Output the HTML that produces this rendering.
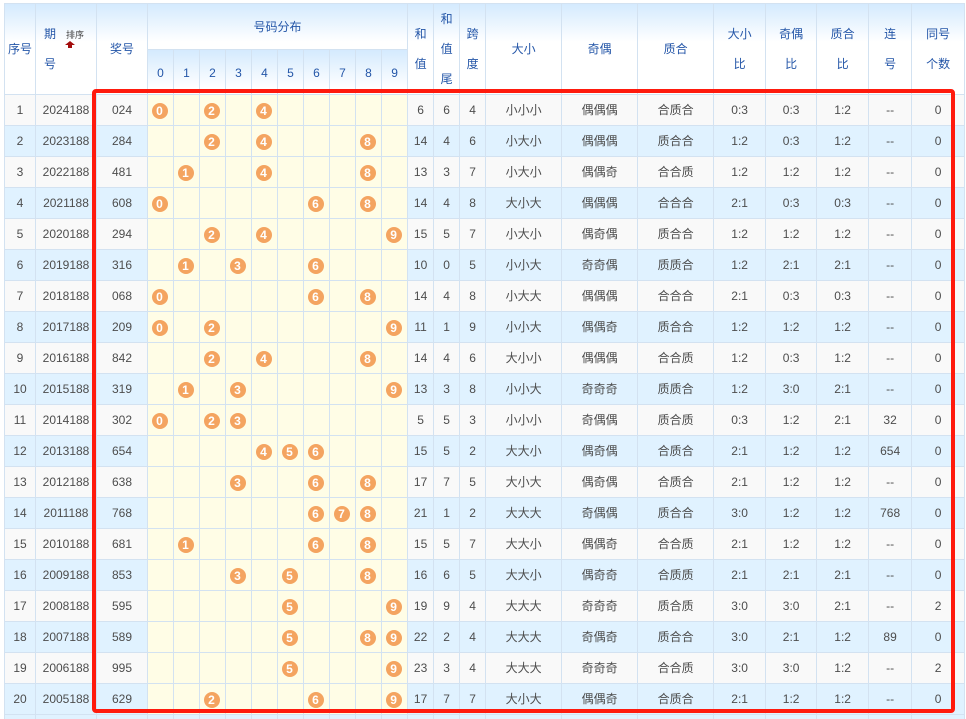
<!DOCTYPE html>
<html lang="zh">
<head>
<meta charset="utf-8">
<title>号码分布</title>
<style>
html,body{margin:0;padding:0;background:#fff;width:966px;height:719px;overflow:hidden}
body{position:relative;font:12px/1.2 "Liberation Sans","Noto Sans CJK SC",sans-serif;color:#4d4d4d}
table{position:absolute;left:4px;top:3px;width:960px;table-layout:fixed;border-collapse:collapse}
td,th{border:1px solid #d3e2f1;padding:0;text-align:center;font-weight:normal;overflow:hidden}
th{color:#2456a8;line-height:30px;background:#fff linear-gradient(#d4eafe,#fff) no-repeat;background-size:100% 38px}
.h1{height:45px}.h2{height:44px}
.h2 th{padding-top:1px;line-height:42px;box-sizing:border-box}
tbody tr{height:31px}
td{height:30px;line-height:30px;background:#f9f9f9}
tr.b td{background:#e0f2ff}
td.y,tr.b td.y{background:#fffde6}
i{display:inline-block;width:16px;height:16px;border-radius:50%;background:#f4a460;color:#fff;font:bold 12px/16px "Liberation Sans",sans-serif;vertical-align:middle;position:relative;left:-1px}
.abs{position:absolute;line-height:14px}
#box{position:absolute;left:92px;top:89px;width:855px;height:616px;border:4px solid #ff1a0d;border-radius:4px}
</style>
</head>
<body>
<table>
<colgroup><col style="width:31px"><col style="width:61px"><col style="width:51px"><col style="width:26px"><col style="width:26px"><col style="width:26px"><col style="width:26px"><col style="width:26px"><col style="width:26px"><col style="width:26px"><col style="width:26px"><col style="width:26px"><col style="width:26px"><col style="width:26px"><col style="width:26px"><col style="width:26px"><col style="width:76px"><col style="width:76px"><col style="width:76px"><col style="width:52px"><col style="width:51px"><col style="width:52px"><col style="width:43px"><col style="width:53px"></colgroup>
<thead>
<tr class="h1"><th rowspan="2">序号</th><th rowspan="2"></th><th rowspan="2">奖号</th><th colspan="10" style="padding-bottom:0">号码分布</th><th rowspan="2">和<br>值</th><th rowspan="2">和<br>值<br>尾</th><th rowspan="2">跨<br>度</th><th rowspan="2">大小</th><th rowspan="2">奇偶</th><th rowspan="2">质合</th><th rowspan="2">大小<br>比</th><th rowspan="2">奇偶<br>比</th><th rowspan="2">质合<br>比</th><th rowspan="2">连<br>号</th><th rowspan="2">同号<br>个数</th></tr>
<tr class="h2"><th>0</th><th>1</th><th>2</th><th>3</th><th>4</th><th>5</th><th>6</th><th>7</th><th>8</th><th>9</th></tr>
</thead>
<tbody>
<tr><td>1</td><td>2024188</td><td>024</td><td class="y"><i>0</i></td><td class="y"></td><td class="y"><i>2</i></td><td class="y"></td><td class="y"><i>4</i></td><td class="y"></td><td class="y"></td><td class="y"></td><td class="y"></td><td class="y"></td><td>6</td><td>6</td><td>4</td><td>小小小</td><td>偶偶偶</td><td>合质合</td><td>0:3</td><td>0:3</td><td>1:2</td><td>--</td><td>0</td></tr>
<tr class="b"><td>2</td><td>2023188</td><td>284</td><td class="y"></td><td class="y"></td><td class="y"><i>2</i></td><td class="y"></td><td class="y"><i>4</i></td><td class="y"></td><td class="y"></td><td class="y"></td><td class="y"><i>8</i></td><td class="y"></td><td>14</td><td>4</td><td>6</td><td>小大小</td><td>偶偶偶</td><td>质合合</td><td>1:2</td><td>0:3</td><td>1:2</td><td>--</td><td>0</td></tr>
<tr><td>3</td><td>2022188</td><td>481</td><td class="y"></td><td class="y"><i>1</i></td><td class="y"></td><td class="y"></td><td class="y"><i>4</i></td><td class="y"></td><td class="y"></td><td class="y"></td><td class="y"><i>8</i></td><td class="y"></td><td>13</td><td>3</td><td>7</td><td>小大小</td><td>偶偶奇</td><td>合合质</td><td>1:2</td><td>1:2</td><td>1:2</td><td>--</td><td>0</td></tr>
<tr class="b"><td>4</td><td>2021188</td><td>608</td><td class="y"><i>0</i></td><td class="y"></td><td class="y"></td><td class="y"></td><td class="y"></td><td class="y"></td><td class="y"><i>6</i></td><td class="y"></td><td class="y"><i>8</i></td><td class="y"></td><td>14</td><td>4</td><td>8</td><td>大小大</td><td>偶偶偶</td><td>合合合</td><td>2:1</td><td>0:3</td><td>0:3</td><td>--</td><td>0</td></tr>
<tr><td>5</td><td>2020188</td><td>294</td><td class="y"></td><td class="y"></td><td class="y"><i>2</i></td><td class="y"></td><td class="y"><i>4</i></td><td class="y"></td><td class="y"></td><td class="y"></td><td class="y"></td><td class="y"><i>9</i></td><td>15</td><td>5</td><td>7</td><td>小大小</td><td>偶奇偶</td><td>质合合</td><td>1:2</td><td>1:2</td><td>1:2</td><td>--</td><td>0</td></tr>
<tr class="b"><td>6</td><td>2019188</td><td>316</td><td class="y"></td><td class="y"><i>1</i></td><td class="y"></td><td class="y"><i>3</i></td><td class="y"></td><td class="y"></td><td class="y"><i>6</i></td><td class="y"></td><td class="y"></td><td class="y"></td><td>10</td><td>0</td><td>5</td><td>小小大</td><td>奇奇偶</td><td>质质合</td><td>1:2</td><td>2:1</td><td>2:1</td><td>--</td><td>0</td></tr>
<tr><td>7</td><td>2018188</td><td>068</td><td class="y"><i>0</i></td><td class="y"></td><td class="y"></td><td class="y"></td><td class="y"></td><td class="y"></td><td class="y"><i>6</i></td><td class="y"></td><td class="y"><i>8</i></td><td class="y"></td><td>14</td><td>4</td><td>8</td><td>小大大</td><td>偶偶偶</td><td>合合合</td><td>2:1</td><td>0:3</td><td>0:3</td><td>--</td><td>0</td></tr>
<tr class="b"><td>8</td><td>2017188</td><td>209</td><td class="y"><i>0</i></td><td class="y"></td><td class="y"><i>2</i></td><td class="y"></td><td class="y"></td><td class="y"></td><td class="y"></td><td class="y"></td><td class="y"></td><td class="y"><i>9</i></td><td>11</td><td>1</td><td>9</td><td>小小大</td><td>偶偶奇</td><td>质合合</td><td>1:2</td><td>1:2</td><td>1:2</td><td>--</td><td>0</td></tr>
<tr><td>9</td><td>2016188</td><td>842</td><td class="y"></td><td class="y"></td><td class="y"><i>2</i></td><td class="y"></td><td class="y"><i>4</i></td><td class="y"></td><td class="y"></td><td class="y"></td><td class="y"><i>8</i></td><td class="y"></td><td>14</td><td>4</td><td>6</td><td>大小小</td><td>偶偶偶</td><td>合合质</td><td>1:2</td><td>0:3</td><td>1:2</td><td>--</td><td>0</td></tr>
<tr class="b"><td>10</td><td>2015188</td><td>319</td><td class="y"></td><td class="y"><i>1</i></td><td class="y"></td><td class="y"><i>3</i></td><td class="y"></td><td class="y"></td><td class="y"></td><td class="y"></td><td class="y"></td><td class="y"><i>9</i></td><td>13</td><td>3</td><td>8</td><td>小小大</td><td>奇奇奇</td><td>质质合</td><td>1:2</td><td>3:0</td><td>2:1</td><td>--</td><td>0</td></tr>
<tr><td>11</td><td>2014188</td><td>302</td><td class="y"><i>0</i></td><td class="y"></td><td class="y"><i>2</i></td><td class="y"><i>3</i></td><td class="y"></td><td class="y"></td><td class="y"></td><td class="y"></td><td class="y"></td><td class="y"></td><td>5</td><td>5</td><td>3</td><td>小小小</td><td>奇偶偶</td><td>质合质</td><td>0:3</td><td>1:2</td><td>2:1</td><td>32</td><td>0</td></tr>
<tr class="b"><td>12</td><td>2013188</td><td>654</td><td class="y"></td><td class="y"></td><td class="y"></td><td class="y"></td><td class="y"><i>4</i></td><td class="y"><i>5</i></td><td class="y"><i>6</i></td><td class="y"></td><td class="y"></td><td class="y"></td><td>15</td><td>5</td><td>2</td><td>大大小</td><td>偶奇偶</td><td>合质合</td><td>2:1</td><td>1:2</td><td>1:2</td><td>654</td><td>0</td></tr>
<tr><td>13</td><td>2012188</td><td>638</td><td class="y"></td><td class="y"></td><td class="y"></td><td class="y"><i>3</i></td><td class="y"></td><td class="y"></td><td class="y"><i>6</i></td><td class="y"></td><td class="y"><i>8</i></td><td class="y"></td><td>17</td><td>7</td><td>5</td><td>大小大</td><td>偶奇偶</td><td>合质合</td><td>2:1</td><td>1:2</td><td>1:2</td><td>--</td><td>0</td></tr>
<tr class="b"><td>14</td><td>2011188</td><td>768</td><td class="y"></td><td class="y"></td><td class="y"></td><td class="y"></td><td class="y"></td><td class="y"></td><td class="y"><i>6</i></td><td class="y"><i>7</i></td><td class="y"><i>8</i></td><td class="y"></td><td>21</td><td>1</td><td>2</td><td>大大大</td><td>奇偶偶</td><td>质合合</td><td>3:0</td><td>1:2</td><td>1:2</td><td>768</td><td>0</td></tr>
<tr><td>15</td><td>2010188</td><td>681</td><td class="y"></td><td class="y"><i>1</i></td><td class="y"></td><td class="y"></td><td class="y"></td><td class="y"></td><td class="y"><i>6</i></td><td class="y"></td><td class="y"><i>8</i></td><td class="y"></td><td>15</td><td>5</td><td>7</td><td>大大小</td><td>偶偶奇</td><td>合合质</td><td>2:1</td><td>1:2</td><td>1:2</td><td>--</td><td>0</td></tr>
<tr class="b"><td>16</td><td>2009188</td><td>853</td><td class="y"></td><td class="y"></td><td class="y"></td><td class="y"><i>3</i></td><td class="y"></td><td class="y"><i>5</i></td><td class="y"></td><td class="y"></td><td class="y"><i>8</i></td><td class="y"></td><td>16</td><td>6</td><td>5</td><td>大大小</td><td>偶奇奇</td><td>合质质</td><td>2:1</td><td>2:1</td><td>2:1</td><td>--</td><td>0</td></tr>
<tr><td>17</td><td>2008188</td><td>595</td><td class="y"></td><td class="y"></td><td class="y"></td><td class="y"></td><td class="y"></td><td class="y"><i>5</i></td><td class="y"></td><td class="y"></td><td class="y"></td><td class="y"><i>9</i></td><td>19</td><td>9</td><td>4</td><td>大大大</td><td>奇奇奇</td><td>质合质</td><td>3:0</td><td>3:0</td><td>2:1</td><td>--</td><td>2</td></tr>
<tr class="b"><td>18</td><td>2007188</td><td>589</td><td class="y"></td><td class="y"></td><td class="y"></td><td class="y"></td><td class="y"></td><td class="y"><i>5</i></td><td class="y"></td><td class="y"></td><td class="y"><i>8</i></td><td class="y"><i>9</i></td><td>22</td><td>2</td><td>4</td><td>大大大</td><td>奇偶奇</td><td>质合合</td><td>3:0</td><td>2:1</td><td>1:2</td><td>89</td><td>0</td></tr>
<tr><td>19</td><td>2006188</td><td>995</td><td class="y"></td><td class="y"></td><td class="y"></td><td class="y"></td><td class="y"></td><td class="y"><i>5</i></td><td class="y"></td><td class="y"></td><td class="y"></td><td class="y"><i>9</i></td><td>23</td><td>3</td><td>4</td><td>大大大</td><td>奇奇奇</td><td>合合质</td><td>3:0</td><td>3:0</td><td>1:2</td><td>--</td><td>2</td></tr>
<tr class="b"><td>20</td><td>2005188</td><td>629</td><td class="y"></td><td class="y"></td><td class="y"><i>2</i></td><td class="y"></td><td class="y"></td><td class="y"></td><td class="y"><i>6</i></td><td class="y"></td><td class="y"></td><td class="y"><i>9</i></td><td>17</td><td>7</td><td>7</td><td>大小大</td><td>偶偶奇</td><td>合质合</td><td>2:1</td><td>1:2</td><td>1:2</td><td>--</td><td>0</td></tr>
<tr class="b"><td></td><td></td><td></td><td></td><td></td><td></td><td></td><td></td><td></td><td></td><td></td><td></td><td></td><td></td><td></td><td></td><td></td><td></td><td></td><td></td><td></td><td></td><td></td><td></td></tr>
</tbody>
</table>
<div class="abs" style="left:44px;top:27px;color:#2456a8">期</div>
<div class="abs" style="left:44px;top:57px;color:#2456a8">号</div>
<div class="abs" style="left:66px;top:28px;font-size:9px;color:#444">排序</div>
<svg style="position:absolute;left:65px;top:41px" width="10" height="7" viewBox="0 0 10 7"><path d="M5 0L10 4H7V7H3V4H0Z" fill="#a30d0d"/></svg>
<div id="box"></div>
</body>
</html>
